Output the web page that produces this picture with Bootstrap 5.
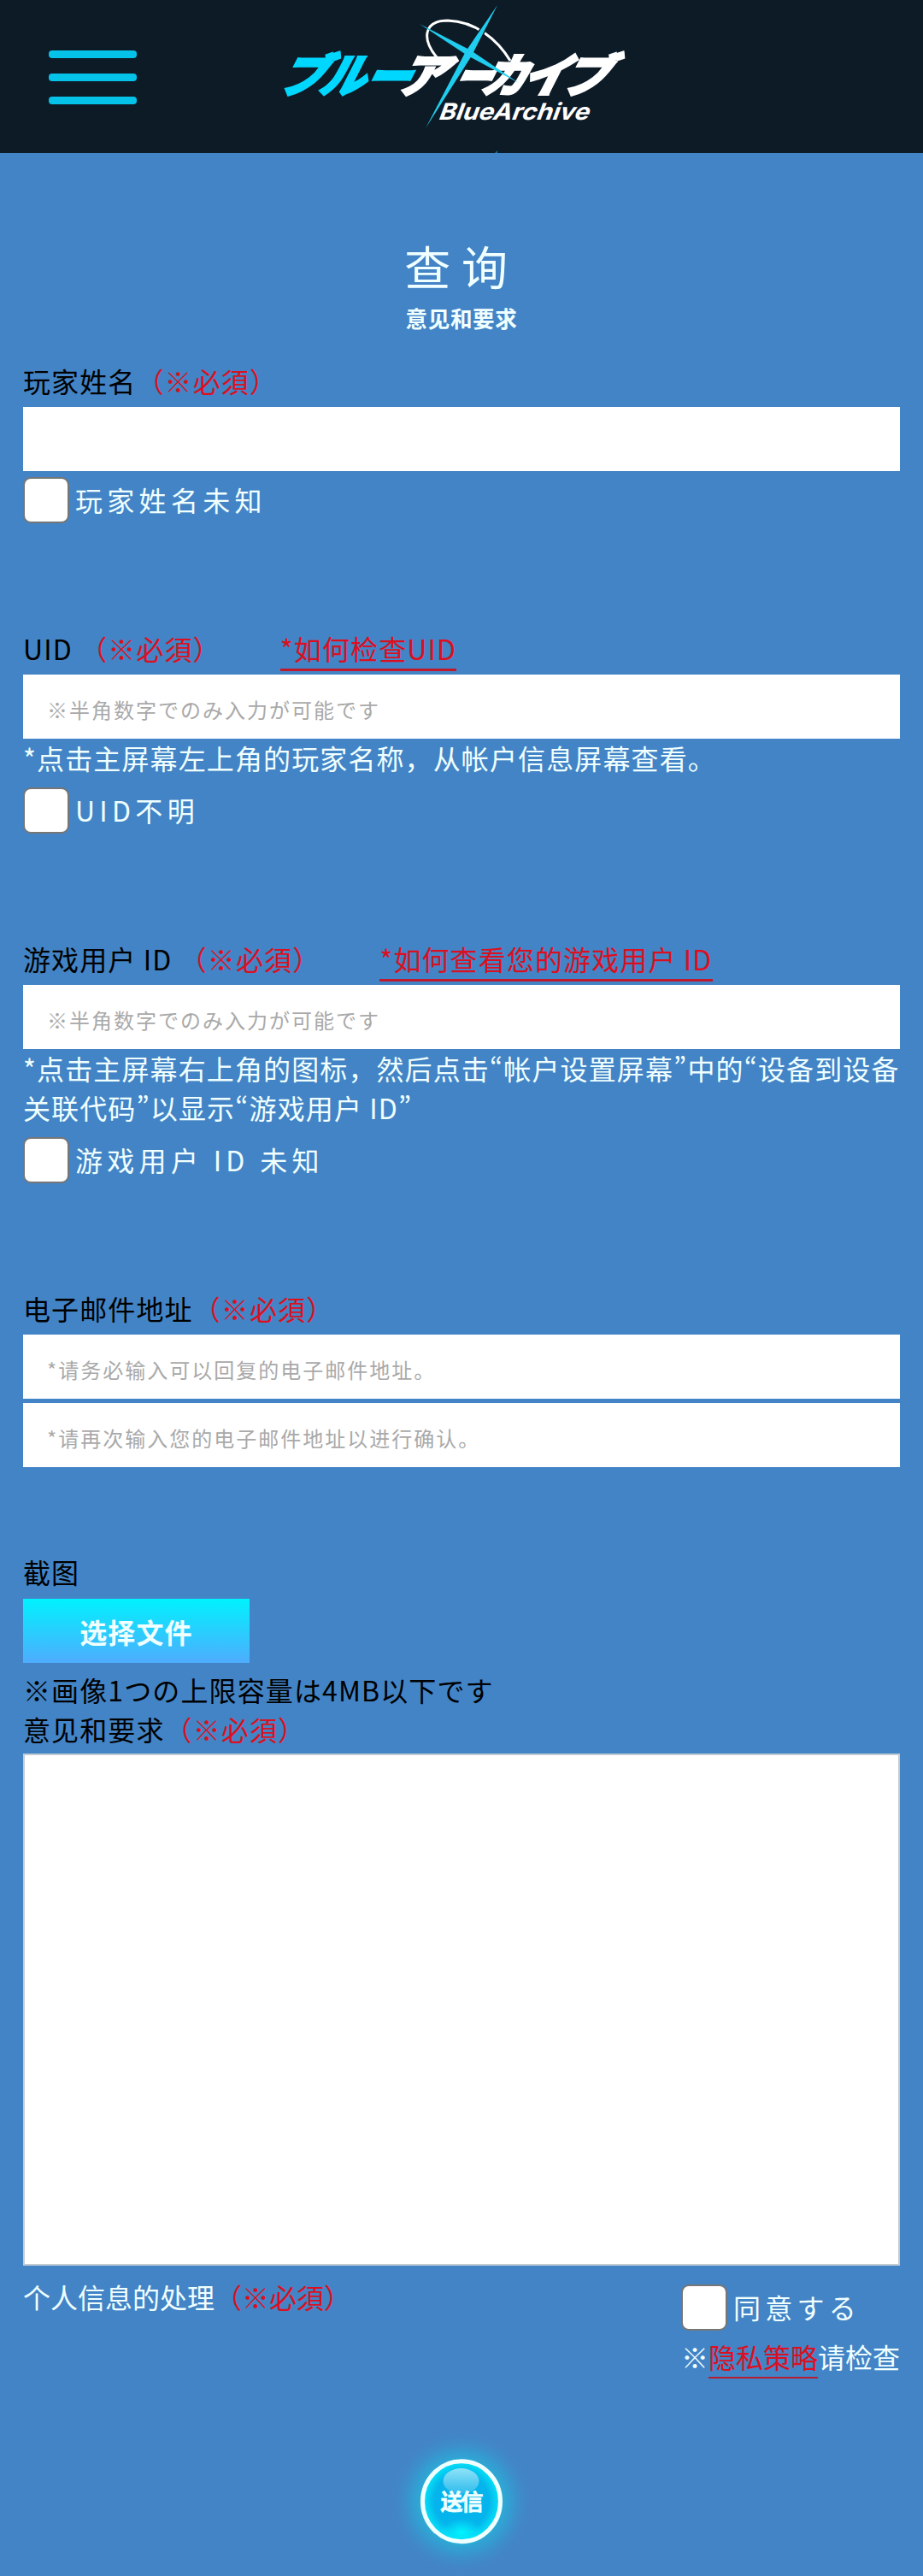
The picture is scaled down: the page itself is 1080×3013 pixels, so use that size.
<!DOCTYPE html>
<html lang="zh-CN">
<head>
    <meta charset="UTF-8">
    <meta name="viewport" content="width=device-width, initial-scale=1.0">
    <title>查询 | ブルーアーカイブ</title>
    <link href="https://cdn.jsdelivr.net/npm/bootstrap@5.3.0/dist/css/bootstrap.min.css" rel="stylesheet">
    <style>
        body {
            background: #4384c6;
            color: azure;
            font-family: "Noto Sans CJK SC", "Noto Sans CJK JP", sans-serif;
            font-size: 32px;
            line-height: 46px;
        }
        .site-header { height: 179px; background: #0d1b27; padding-left: 57px; }
        .menu-btn { width: 103px; height: 63px; margin-top: 59px; }
        .menu-btn span { height: 9px; border-radius: 4px; background: #05c3e8; }
        .logo { width: 420px; height: 179px; margin-left: 160px; overflow: visible; }
        .page { padding: 93px 27px 0; }
        .page-title { font-size: 54px; line-height: 78px; letter-spacing: 12.8px; margin-bottom: 3px; }
        .page-sub { font-size: 25.6px; line-height: 38px; letter-spacing: .6px; margin-bottom: 31px; }
        .field { margin-bottom: 123px; }
        .email-field { margin-bottom: 99px; }
        .field-label { color: #000; letter-spacing: 1.12px; height: 46px; margin-bottom: 8px; }
        .req { color: #dc0f20; }
        .help-link { color: #dc0f20; border-bottom: 3px solid #c0182c; text-decoration: none; height: 50px; margin-left: 69px; }
        .form-control.field-input {
            height: 75px; padding: 6px 28px 0; font-size: 24px; letter-spacing: 2px; color: #000;
        }
        .field-input::placeholder { color: #a9a9a9; opacity: 1; }
        .field-input + .field-input { margin-top: 5px; }
        .field-input + .check-row { padding-top: 7px; }
        .note { letter-spacing: 1.12px; margin: -1px -10px 12px 0; }
        .form-check-input.check-box {
            width: 54px; height: 54px; margin: 0 7px 0 0; border: 2px solid #767676; border-radius: 9px; flex: none;
        }
        .check-text { letter-spacing: 5.3px; line-height: 52px; }
        .btn.file-btn {
            width: 265px; height: 75px; border-radius: 0; color: azure; font-size: 32px; font-weight: 700;
            letter-spacing: 1.12px; background: linear-gradient(#00f2fe, #4facfe); margin: 9px 0 8px;
        }
        .form-control.message { height: 599px; border: 2px solid #c3cbd3; resize: none; margin-top: 6px; }
        .privacy { margin-top: 13px; }
        .agree { padding-top: 9px; }
        .agree .check-row { margin-bottom: 7px; }
        .policy-link { color: #dc0f20; border-bottom: 2px solid #b51c30; text-decoration: none; display: inline-block; height: 49px; }
        .send-btn { width: 200px; height: 193px; margin-top: 38px; }
    </style>
</head>
<body>
    <header class="site-header d-flex align-items-start">
        <button type="button" class="menu-btn btn p-0 border-0 rounded-0 d-flex flex-column justify-content-between" aria-label="menu">
            <span class="w-100"></span>
            <span class="w-100"></span>
            <span class="w-100"></span>
        </button>
        <svg class="logo" viewBox="0 0 420 179" role="img" aria-label="BlueArchive">
            <!-- halo -->
            <path d="M191 67 C173 45 176 24 204 24 C236 25 262 46 277 71" fill="none" stroke="#fff" stroke-width="3"/>
            <g font-family="'Noto Sans CJK JP', sans-serif" font-weight="900" font-size="54" stroke-width="2.6">
                <g fill="#00d7ff" stroke="#00d7ff">
                    <text transform="translate(4 108) skewX(-27) scale(1 1)">ブ</text>
                    <text transform="translate(52 108) skewX(-27) scale(.97 1)">ル</text>
                    <text transform="translate(104 109) skewX(-27) scale(.97 1)">ー</text>
                </g>
                <g fill="#fff" stroke="#fff">
                    <text transform="translate(142 108) skewX(-27) scale(1.05 1)">ア</text>
                    <text transform="translate(208 109) skewX(-27) scale(.8 1)">ー</text>
                    <text transform="translate(240 108) skewX(-27) scale(1 1)">カ</text>
                    <text transform="translate(288 108) skewX(-27) scale(1 1)">イ</text>
                    <text transform="translate(335 108) skewX(-27) scale(1.02 1)">ブ</text>
                </g>
            </g>
            <text transform="translate(192 140) skewX(-20)" font-family="Inter, sans-serif" font-weight="700" font-size="27" textLength="176" lengthAdjust="spacingAndGlyphs" fill="#fff">BlueArchive</text>
            <!-- crossing rays -->
            <path d="M262 6 L232 65 L178 150 L225 60 Z" fill="#20cdee" stroke="#0d1b27" stroke-width="3" paint-order="stroke"/>
            <path d="M171 28 L231 59 L287 97 L227 65 Z" fill="#20cdee"/>
            <path d="M262 176 L259 179 L262 179 Z" fill="#20708a"/>
        </svg>
    </header>

    <main class="page">
        <h1 class="page-title fw-normal text-center">查询</h1>
        <p class="page-sub fw-bold text-center">意见和要求</p>

        <form>
            <div class="field">
                <div class="field-label">玩家姓名<span class="req">（※必須）</span></div>
                <input type="text" class="form-control field-input rounded-0 border-0" aria-label="玩家姓名">
                <label class="check-row d-flex">
                    <input type="checkbox" class="form-check-input check-box">
                    <span class="check-text">玩家姓名未知</span>
                </label>
            </div>

            <div class="field">
                <div class="field-label d-flex">UID&nbsp;<span class="req">（※必須）</span><a href="#" class="help-link">*如何检查UID</a></div>
                <input type="text" class="form-control field-input rounded-0 border-0" placeholder="※半角数字でのみ入力が可能です">
                <p class="note">*点击主屏幕左上角的玩家名称，从帐户信息屏幕查看。</p>
                <label class="check-row d-flex">
                    <input type="checkbox" class="form-check-input check-box">
                    <span class="check-text">UID不明</span>
                </label>
            </div>

            <div class="field">
                <div class="field-label d-flex">游戏用户 ID&nbsp;<span class="req">（※必須）</span><a href="#" class="help-link">*如何查看您的游戏用户 ID</a></div>
                <input type="text" class="form-control field-input rounded-0 border-0" placeholder="※半角数字でのみ入力が可能です">
                <!-- lang="ja" gives the narrow quotation marks -->
                <p class="note">*点击主屏幕右上角的图标，然后点击<span lang="ja">“</span>帐户设置屏幕<span lang="ja">”</span>中的<span lang="ja">“</span>设备到设备<br>关联代码<span lang="ja">”</span>以显示<span lang="ja">“</span>游戏用户 ID<span lang="ja">”</span></p>
                <label class="check-row d-flex">
                    <input type="checkbox" class="form-check-input check-box">
                    <span class="check-text">游戏用户 ID 未知</span>
                </label>
            </div>

            <div class="field email-field">
                <div class="field-label">电子邮件地址<span class="req">（※必須）</span></div>
                <input type="email" class="form-control field-input rounded-0 border-0" placeholder="*请务必输入可以回复的电子邮件地址。">
                <input type="email" class="form-control field-input rounded-0 border-0" placeholder="*请再次输入您的电子邮件地址以进行确认。">
            </div>

            <div class="field-label mb-0">截图</div>
            <button type="button" class="btn file-btn border-0 d-block">选择文件</button>
            <div class="field-label mb-0">※画像1つの上限容量は4MB以下です</div>
            <div class="field-label mb-0">意见和要求<span class="req">（※必須）</span></div>
            <textarea class="form-control message rounded-0" aria-label="意见和要求"></textarea>

            <div class="privacy d-flex justify-content-between">
                <div>个人信息的处理<span class="req">（※必須）</span></div>
                <div class="agree">
                    <label class="check-row d-flex">
                        <input type="checkbox" class="form-check-input check-box">
                        <span class="check-text">同意する</span>
                    </label>
                    <div class="d-flex">※<a href="#" class="policy-link">隐私策略</a>请检查</div>
                </div>
            </div>

            <div class="text-center">
                <button type="submit" class="btn send-btn border-0 p-0 d-block mx-auto" aria-label="送信">
                    <svg class="d-block" width="200" height="193" viewBox="0 0 200 193">
                        <defs>
                            <radialGradient id="glow">
                                <stop offset=".5" stop-color="#28b4d8"/>
                                <stop offset=".7" stop-color="#30a2d4" stop-opacity=".7"/>
                                <stop offset="1" stop-color="#4384c6" stop-opacity="0"/>
                            </radialGradient>
                            <radialGradient id="ball">
                                <stop offset=".7" stop-color="#05b4ec"/>
                                <stop offset="1" stop-color="#05e6f7"/>
                            </radialGradient>
                            <radialGradient id="shine">
                                <stop offset="0" stop-color="#00f4ff"/>
                                <stop offset="1" stop-color="#00f4ff" stop-opacity="0"/>
                            </radialGradient>
                            <linearGradient id="gloss" x2="0" y2="1">
                                <stop offset="0" stop-color="#8fe2f8"/>
                                <stop offset="1" stop-color="#2dbcec"/>
                            </linearGradient>
                        </defs>
                        <circle cx="100" cy="106" r="85" fill="url(#glow)"/>
                        <ellipse cx="100" cy="105.7" rx="45.5" ry="47" fill="url(#ball)"/>
                        <ellipse cx="100" cy="142" rx="24" ry="16" fill="url(#shine)"/>
                        <ellipse cx="100" cy="105.7" rx="45.5" ry="47" fill="none" stroke="azure" stroke-width="5"/>
                        <ellipse cx="99.5" cy="82" rx="21" ry="15" fill="url(#gloss)"/>
                        <text x="100.5" y="116" text-anchor="middle" font-family="'Noto Sans CJK JP', sans-serif" font-weight="700" font-size="26" fill="azure" stroke="azure" stroke-width=".6" textLength="50">送信</text>
                    </svg>
                </button>
            </div>
        </form>
    </main>
    <script src="https://cdn.jsdelivr.net/npm/bootstrap@5.3.0/dist/js/bootstrap.bundle.min.js"></script>
</body>
</html>
